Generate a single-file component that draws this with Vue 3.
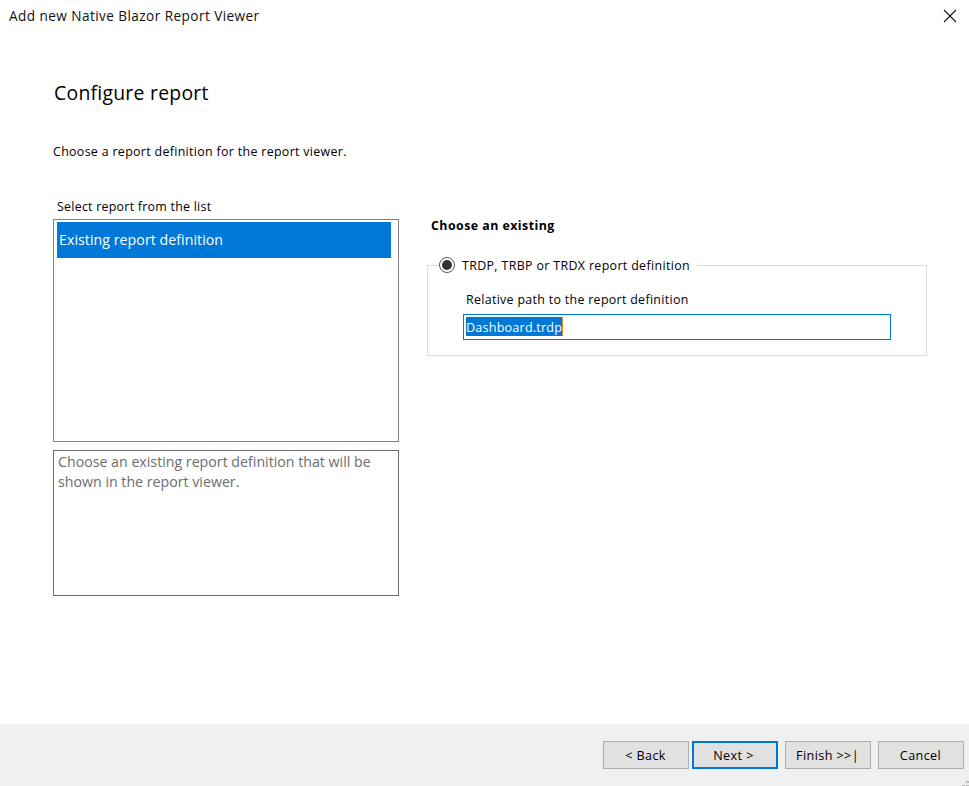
<script setup>
const buttons = [
  { label: '< Back', primary: false },
  { label: 'Next >', primary: true },
  { label: 'Finish >>|', primary: false },
  { label: 'Cancel', primary: false }
]
</script>

<template>
  <div class="dialog">
    <header class="titlebar">
      <span class="title">Add new Native Blazor Report Viewer</span>
      <svg class="close" width="14" height="14" viewBox="0 0 14 14">
        <path d="M1 1 L13 13 M13 1 L1 13" stroke="#111" stroke-width="1.1" fill="none" />
      </svg>
    </header>

    <main class="content">
      <h1 class="heading">Configure report</h1>
      <p class="intro">Choose a report definition for the report viewer.</p>

      <div class="columns">
        <section class="left">
          <div class="list-label">Select report from the list</div>
          <div class="listbox">
            <div class="list-item">Existing report definition</div>
          </div>
          <div class="description">Choose an existing report definition that will be shown in the report viewer.</div>
        </section>

        <section class="right">
          <div class="choose">Choose an existing</div>
          <fieldset class="group">
            <legend class="legend">
              <span class="radio"><span class="radio-dot"></span></span>
              <span class="legend-text">TRDP, TRBP or TRDX report definition</span>
            </legend>
            <div class="path-label">Relative path to the report definition</div>
            <div class="path-input"><span class="selected">Dashboard.trdp</span></div>
          </fieldset>
        </section>
      </div>
    </main>

    <footer class="footer">
      <button v-for="b in buttons" :key="b.label" class="btn" :class="{ primary: b.primary }">{{ b.label }}</button>
      <svg class="grip" width="7" height="5" viewBox="0 0 7 5">
        <path d="M4 0h3v2H4zM0 4h3v1H0zM4 4h3v1H4z" fill="#b8b8b8" />
      </svg>
    </footer>
  </div>
</template>

<style>
html, body { margin: 0; background: #fff; }
</style>

<style scoped>
.dialog {
  width: 969px;
  height: 786px;
  display: flex;
  flex-direction: column;
  background: #fff;
  color: #000;
  font-family: "Open Sans", "Noto Sans", sans-serif;
  font-size: 12.4px;
  overflow: hidden;
}
.titlebar {
  height: 30px;
  flex: none;
  display: flex;
  justify-content: space-between;
  align-items: flex-start;
  padding: 0 12px 0 9px;
}
.title { font-size: 13.6px; line-height: 31px; letter-spacing: 0.43px; color: #111; }
.close { margin-top: 9px; }
.content { flex: 1; padding: 0 42px 0 53px; min-height: 0; }
.heading {
  margin: 49px 0 0 1px;
  font-size: 19.4px;
  font-weight: 400;
  line-height: 28px;
  letter-spacing: 0.25px;
}
.intro { margin: 37px 0 0; line-height: 16px; letter-spacing: 0.33px; }
.columns { display: flex; margin-top: 39px; gap: 28px; }
.left { width: 346px; flex: none; }
.list-label { padding-left: 4px; line-height: 16px; height: 20px; letter-spacing: 0.26px; }
.listbox {
  box-sizing: border-box;
  height: 223px;
  border: 1px solid #82828c;
  padding: 2px 7px 0 3px;
}
.list-item {
  height: 36px;
  line-height: 36px;
  background: #0078d7;
  color: #fff;
  padding-left: 2px;
  font-size: 14.2px;
  letter-spacing: 0.04px;
}
.description {
  box-sizing: border-box;
  height: 146px;
  margin-top: 8px;
  border: 1px solid #6e6e6e;
  padding: 1px 4px;
  color: #6d6d6d;
  font-size: 14.2px;
  line-height: 20px;
}
.right { width: 500px; flex: none; padding-top: 19px; }
.choose { font-weight: 700; line-height: 16px; padding-left: 4px; letter-spacing: 0.45px; }
.group {
  box-sizing: border-box;
  height: 100px;
  margin: 22px 0 0;
  padding: 0;
  border: 1px solid #dcdcdc;
  min-width: 0;
}
.legend {
  display: flex;
  align-items: center;
  margin-left: 11px;
  padding: 0 7px 0 0;
  gap: 7px;
  line-height: 16px;
  letter-spacing: 0.36px;
}
.legend-text { padding-top: 2px; }
.radio {
  box-sizing: border-box;
  width: 16px;
  height: 16px;
  border: 1px solid #555;
  border-radius: 50%;
  display: flex;
  align-items: center;
  justify-content: center;
}
.radio-dot { width: 10px; height: 10px; border-radius: 50%; background: #333; }
.path-label { margin: 18px 0 0 38px; line-height: 16px; letter-spacing: 0.32px; }
.path-input {
  box-sizing: border-box;
  width: 428px;
  height: 26px;
  margin: 6px 0 0 35px;
  border: 1px solid #0078d7;
  padding: 2px;
  display: flex;
}
.selected {
  background: #0078d7;
  color: #fff;
  height: 19px;
  line-height: 21px;
  font-size: 12.6px;
  letter-spacing: 0.2px;
  border-right: 1px solid #e8832a;
}
.footer {
  position: relative;
  height: 62px;
  flex: none;
  box-sizing: border-box;
  background: #f0f0f0;
  display: flex;
  justify-content: flex-end;
  align-items: flex-start;
  padding: 17px 5px 0 0;
  gap: 7px;
}
.btn {
  box-sizing: border-box;
  width: 86px;
  height: 28px;
  padding: 0 1px 0 0;
  background: #e1e1e1;
  border: 1px solid #adadad;
  border-radius: 0;
  color: #000;
  font-family: inherit;
  font-size: 12.6px;
  letter-spacing: 0.4px;
}
.btn.primary { border: 2px solid #0078d7; margin-left: -4px; padding-right: 3px; }
.grip { position: absolute; right: 0; bottom: 0; }
</style>
